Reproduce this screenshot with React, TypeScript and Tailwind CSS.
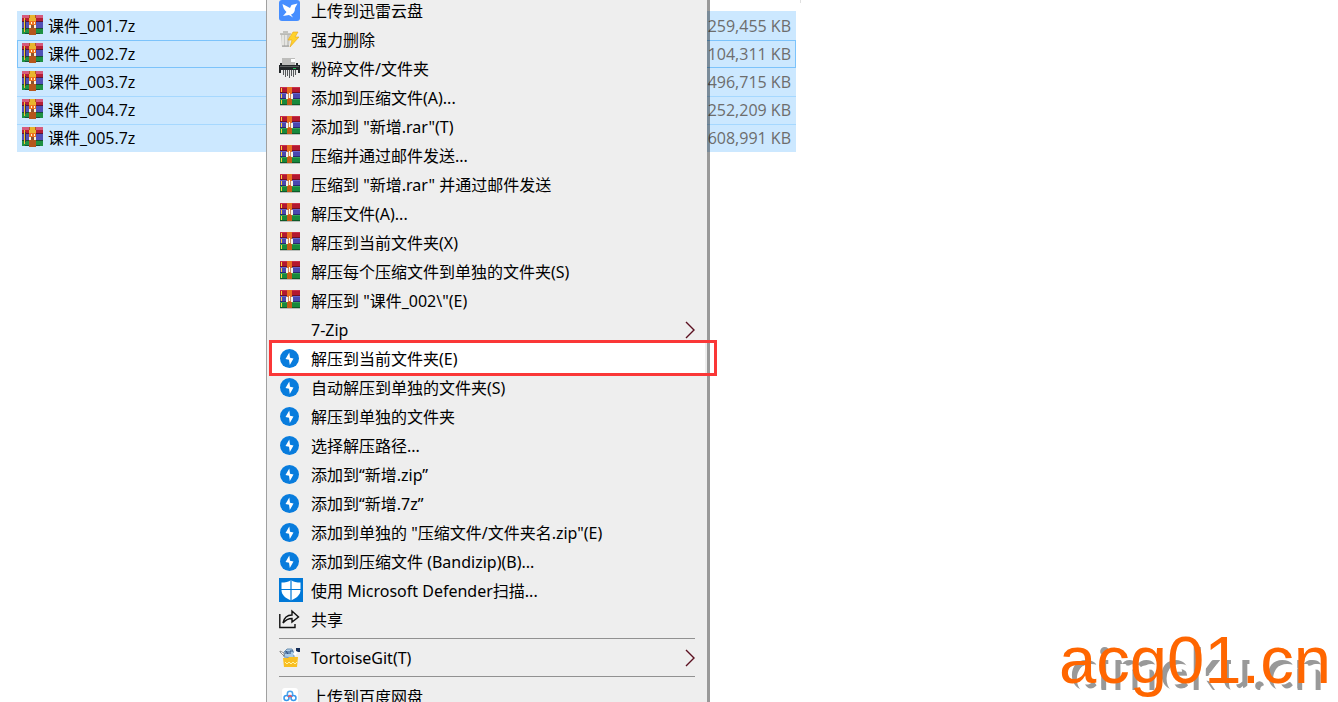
import React from 'react';

// Archive icon used by the menu entries
const RarIcon = () => (
  <svg viewBox="0 0 20 19" className="w-5 h-[19px] ml-px mb-0.5" shapeRendering="crispEdges">
    <rect width="20" height="6" fill="#b3182f"/>
    <rect width="20" height="1" fill="#c93048"/>
    <rect y="5" width="20" height="1" fill="#6e1021"/>
    <rect y="6" width="20" height="6" fill="#4a48b0"/>
    <rect y="6" width="20" height="1" fill="#6765c8"/>
    <rect y="11" width="20" height="1" fill="#2b2a6d"/>
    <rect y="12" width="20" height="6" fill="#178a3c"/>
    <rect y="12" width="20" height="1" fill="#34a055"/>
    <rect y="17" width="20" height="1" fill="#0f5a28"/>
    <rect y="18" width="20" height="1" fill="#b9bdb9"/>
    <path d="M1 1h1v4H1zM1 7h1v4H1zM1 13h1v4H1z" fill="#ffd338"/>
    <rect x="7" width="5" height="18" fill="#e8701f"/>
    <rect x="7" y="12" width="5" height="6" fill="#c35a17"/>
    <path d="M6 7h2v5H6zM11 7h2v5h-2z" fill="#f6f3ea"/>
    <rect x="9" y="6" width="1" height="5" fill="#fff6ea"/>
    <path d="M8 7h1v4H8zM10 7h1v4h-1z" fill="#c98d62"/>
  </svg>
);

const FileIcon = () => (
  <svg viewBox="0 0 21 20" className="w-[21px] h-5 mb-0.5" shapeRendering="crispEdges">
    <rect width="21" height="7" fill="#b51f36"/>
    <rect width="21" height="3" fill="#d65b7d"/>
    <rect y="6" width="21" height="8" fill="#5150b6"/>
    <rect y="6" width="21" height="1" fill="#5c1736"/>
    <rect y="13" width="21" height="6" fill="#1f9142"/>
    <path d="M0 13h21v1H0zM3 18h15v1H3z" fill="#174f35"/>
    <path d="M2 3h1v14H2z" fill="#f7c62f"/>
    <path d="M3 5h1v10H3z" fill="#39304f"/>
    <path d="M7 0h7v20H7z" fill="#b5561c"/>
    <path d="M8 0h5v3h1v3H7V3h1z" fill="#e9b52e"/>
    <path d="M7 6h7v7H7z" fill="#ed7420"/>
    <path d="M7 10h2v3H7zM12 10h2v3h-2zM9 7h1v2H9zM12 7h1v2h-1z" fill="#fff4d5"/>
    <path d="M9 10h3v3H9z" fill="#8b5131"/>
  </svg>
);

const BirdIcon = () => (
  <svg viewBox="0 0 21 21" className="w-[21px] h-[21px]">
    <rect width="21" height="21" rx="3" fill="#468eff"/>
    <path d="M3.500 4L11 8l1.500-3 6-1.500L16 8c0 4-1.500 6-4 6.500l2 3-4-2.500-6 1 3.500-4C5 10 4 7 3.500 4z" fill="#fff"/>
  </svg>
);

const DeleteIcon = () => (
  <svg viewBox="0 0 20 18" className="w-5 h-[18px]">
    <path d="M2 3h9l-1 13H3z" fill="#c8c8c4"/>
    <path d="M1 3h11M4 1h5" stroke="#b5b5b0" strokeWidth="1.5"/>
    <path d="M4 4v11M7 4v11" stroke="#f5f5f2" strokeWidth="1.3"/>
    <path d="M3 15h7" stroke="#999"/>
    <path d="M14 1h5l-3 5h4L11 16l2-7h-4z" fill="#ffd22b" stroke="#e5a519" strokeWidth=".6"/>
  </svg>
);

const ShredderIcon = () => (
  <svg viewBox="0 0 21 20" className="w-[21px] h-5 mb-0.5" shapeRendering="crispEdges">
    <path d="M3 0h13v7H3z" fill="#bdbdbb"/>
    <path d="M12 1h4v3h-4z" fill="#fff"/>
    <path d="M1 5h2v2h14V5h2v2h2v8h-2v-3H2v3H0V7h1z" fill="#222628"/>
    <path d="M1 8.500h19" stroke="#5a5d5e"/>
    <path d="M3 12h15v5H3z" fill="#e8e8e8"/>
    <path d="M4.500 12v5M6.500 12v7M8.500 12v6M10.500 12v8M12.500 12v6M14.500 12v7M16.500 12v5" stroke="#55585a"/>
    <path d="M14 10.500h3" stroke="#24ba57"/>
  </svg>
);

const BandizipIcon = () => (
  <svg viewBox="0 0 20 20" className="w-5 h-5 ml-px">
    <circle cx="9.500" cy="9.500" r="9.500" fill="#087cdd"/>
    <path d="M9.300 3.500L5.500 10l3.500.8.800 5.200 3.700-6.500-3.500-.8z" fill="#fff"/>
  </svg>
);

const DefenderIcon = () => (
  <svg viewBox="0 0 24 24" className="w-6 h-6 mb-0.5">
    <path fill="#0078d7" d="M0 0h24v24H0z"/>
    <path d="M12 2c2 2 6 2.500 9.500 2.500V12c0 5-4 8-9.500 10.500C6.500 20 2.500 17 2.500 12V4.500C6 4.500 10 4 12 2z" fill="#fff"/>
    <path d="M12 2v21M2 11.500h20" stroke="#0078d7" strokeWidth="1.2"/>
  </svg>
);

const ShareIcon = () => (
  <svg viewBox="0 0 21 20" className="w-[21px] h-5 mb-0.5" fill="none" stroke="#111" strokeWidth="1.4">
    <path d="M.8 5v13.500H16V15"/>
    <path d="M4 14c1-5 4-8 9-8V2l6.500 6-6.500 5V9.500c-4 0-6.500 1.500-9 4.500z"/>
  </svg>
);

const TortoiseIcon = () => (
  <svg viewBox="0 0 21 21" className="w-[21px] h-[21px]">
    <path d="M5 10V5l3-3h5l2 4v5z" fill="#a9cbe8" stroke="#6d90b0"/>
    <path d="M7 7V4l2 3V4M11 4v3M11 4h3" stroke="#284b7d" fill="none"/>
    <path d="M1 4l4 2v3L1 5z" fill="#fff" stroke="#666" strokeWidth=".7"/>
    <path d="M15 8l3-4" stroke="#fff" strokeWidth="3"/>
    <path d="M17 1h4v4h-2l-2-1z" fill="#162e58"/>
    <path d="M4 11h5l1-1h9l-1 10H5z" fill="#f9bf21"/>
    <path d="M6 15l2 2 2-2 2 2 2-2 2 2 2-2" stroke="#fff2a6" fill="none"/>
  </svg>
);

const BaiduIcon = () => (
  <svg viewBox="0 0 16 16" className="w-4 h-4 ml-[3px] mb-0.5">
    <rect width="16" height="16" rx="3" fill="#fff"/>
    <g fill="none" strokeWidth="1.5">
      <circle cx="8" cy="6" r="2.700" stroke="#4ba4ee"/>
      <circle cx="4.500" cy="10" r="2.500" stroke="#3798ec"/>
      <circle cx="11.500" cy="10" r="2.500" stroke="#3798ec"/>
      <path d="M6 9l2-1.500 2 1.500" stroke="#ec5362"/>
    </g>
  </svg>
);

const icons: any = {
  bird: <BirdIcon/>,
  trash: <DeleteIcon/>,
  shredder: <ShredderIcon/>,
  rar: <RarIcon/>,
  bandizip: <BandizipIcon/>,
  defender: <DefenderIcon/>,
  share: <ShareIcon/>,
};

const files = [
  {name: '课件_001.7z', size: '259,455 KB'},
  {name: '课件_002.7z', size: '104,311 KB'},
  {name: '课件_003.7z', size: '496,715 KB'},
  {name: '课件_004.7z', size: '252,209 KB'},
  {name: '课件_005.7z', size: '608,991 KB'},
];

const items = [
  {icon: 'bird', text: '上传到迅雷云盘'},
  {icon: 'trash', text: '强力删除'},
  {icon: 'shredder', text: '粉碎文件/文件夹'},
  {icon: 'rar', text: '添加到压缩文件(A)...'},
  {icon: 'rar', text: '添加到 "新增.rar"(T)'},
  {icon: 'rar', text: '压缩并通过邮件发送...'},
  {icon: 'rar', text: '压缩到 "新增.rar" 并通过邮件发送'},
  {icon: 'rar', text: '解压文件(A)...'},
  {icon: 'rar', text: '解压到当前文件夹(X)'},
  {icon: 'rar', text: '解压每个压缩文件到单独的文件夹(S)'},
  {icon: 'rar', text: '解压到 "课件_002\\"(E)'},
  {icon: '', text: '7-Zip', sub: true},
  {icon: 'bandizip', text: '解压到当前文件夹(E)', active: true},
  {icon: 'bandizip', text: '自动解压到单独的文件夹(S)'},
  {icon: 'bandizip', text: '解压到单独的文件夹'},
  {icon: 'bandizip', text: '选择解压路径...'},
  {icon: 'bandizip', text: '添加到“新增.zip”'},
  {icon: 'bandizip', text: '添加到“新增.7z”'},
  {icon: 'bandizip', text: '添加到单独的 "压缩文件/文件夹名.zip"(E)'},
  {icon: 'bandizip', text: '添加到压缩文件 (Bandizip)(B)...'},
  {icon: 'defender', text: '使用 Microsoft Defender扫描...'},
  {icon: 'share', text: '共享'},
];

const MenuItem = ({icon, text, sub, active}: any) => (
  <button className="relative flex items-center w-full h-[29px] px-3 text-left whitespace-nowrap">
    {/* White highlight and the red frame round it */}
    {active && <>
      <span className="absolute -inset-y-px left-1 right-0.5 bg-white"/>
      <span className="absolute -top-1 left-0.5 -right-2.5 h-9 border-3 border-[#fa3737]"/>
    </>}
    <span className="relative flex items-center w-8 shrink-0">{icon}</span>
    <span className="relative grow">{text}</span>
    {sub && <svg viewBox="0 0 10 18" className="w-[10px] h-[18px]" fill="none" stroke="#5b1020" strokeWidth="1.4">
      <path d="M1 1l8 8-8 8"/>
    </svg>}
  </button>
);

const App = () => (
  <main className="relative h-screen overflow-hidden bg-white text-base text-black font-['Noto_Sans','Noto_Sans_CJK_SC',sans-serif]">
    {/* Column separator */}
    <div className="absolute left-[800px] top-0 w-px h-[3px] bg-[#e0e0e0]"/>
    <div className="absolute left-[17px] top-[11px] w-[779px] pt-px bg-[#cce8ff] font-['Open_Sans','Noto_Sans_CJK_SC',sans-serif]">
      <table className="w-full border-collapse">
        <tbody>
        {files.map((file, key) => (
          <tr
            key={key}
            className={key === 1
              ? 'h-7 outline outline-[#7cc3fb] -outline-offset-1'
              : 'h-7 border-b border-[#a6d8ff] last:border-b-0'}
          >
            <td className="p-0 pl-[5px]">
              <div className="flex items-center gap-[5px]"><FileIcon/>{file.name}</div>
            </td>
            <td className="p-0 pr-[5px] text-right text-[#6d6d6d]">{file.size}</td>
          </tr>
        ))}
        </tbody>
      </table>
    </div>

    {/* Context menu */}
    <div className="absolute left-[266px] -top-1 w-[444px] border-l border-r-3 border-l-[#a0a0a0] border-r-black/40 bg-clip-padding bg-[#eee]">
      {items.map((item, key) => <MenuItem key={key} {...item} icon={icons[item.icon]}/>)}
      <hr className="mx-3 my-1 border-[#919191]"/>
      <MenuItem icon={<TortoiseIcon/>} text="TortoiseGit(T)" sub/>
      <hr className="mx-3 mt-1 mb-[5px] border-[#919191]"/>
      <MenuItem icon={<BaiduIcon/>} text="上传到百度网盘"/>
    </div>

    {/* Watermark: white lettering with a grey shadow, the orange one over it */}
    <div className="absolute right-[7px] bottom-1 text-[67px] leading-[76px] whitespace-nowrap font-['Liberation_Sans',sans-serif] text-[#ff6600]">
      <span className="absolute right-0 top-3 text-[57px] font-bold text-white font-['Lato','Liberation_Sans',sans-serif] [text-shadow:-5px_-4px_#999]">cimeku.cn</span>
      <span className="relative">acg01.cn</span>
    </div>
  </main>
);

export default App;
